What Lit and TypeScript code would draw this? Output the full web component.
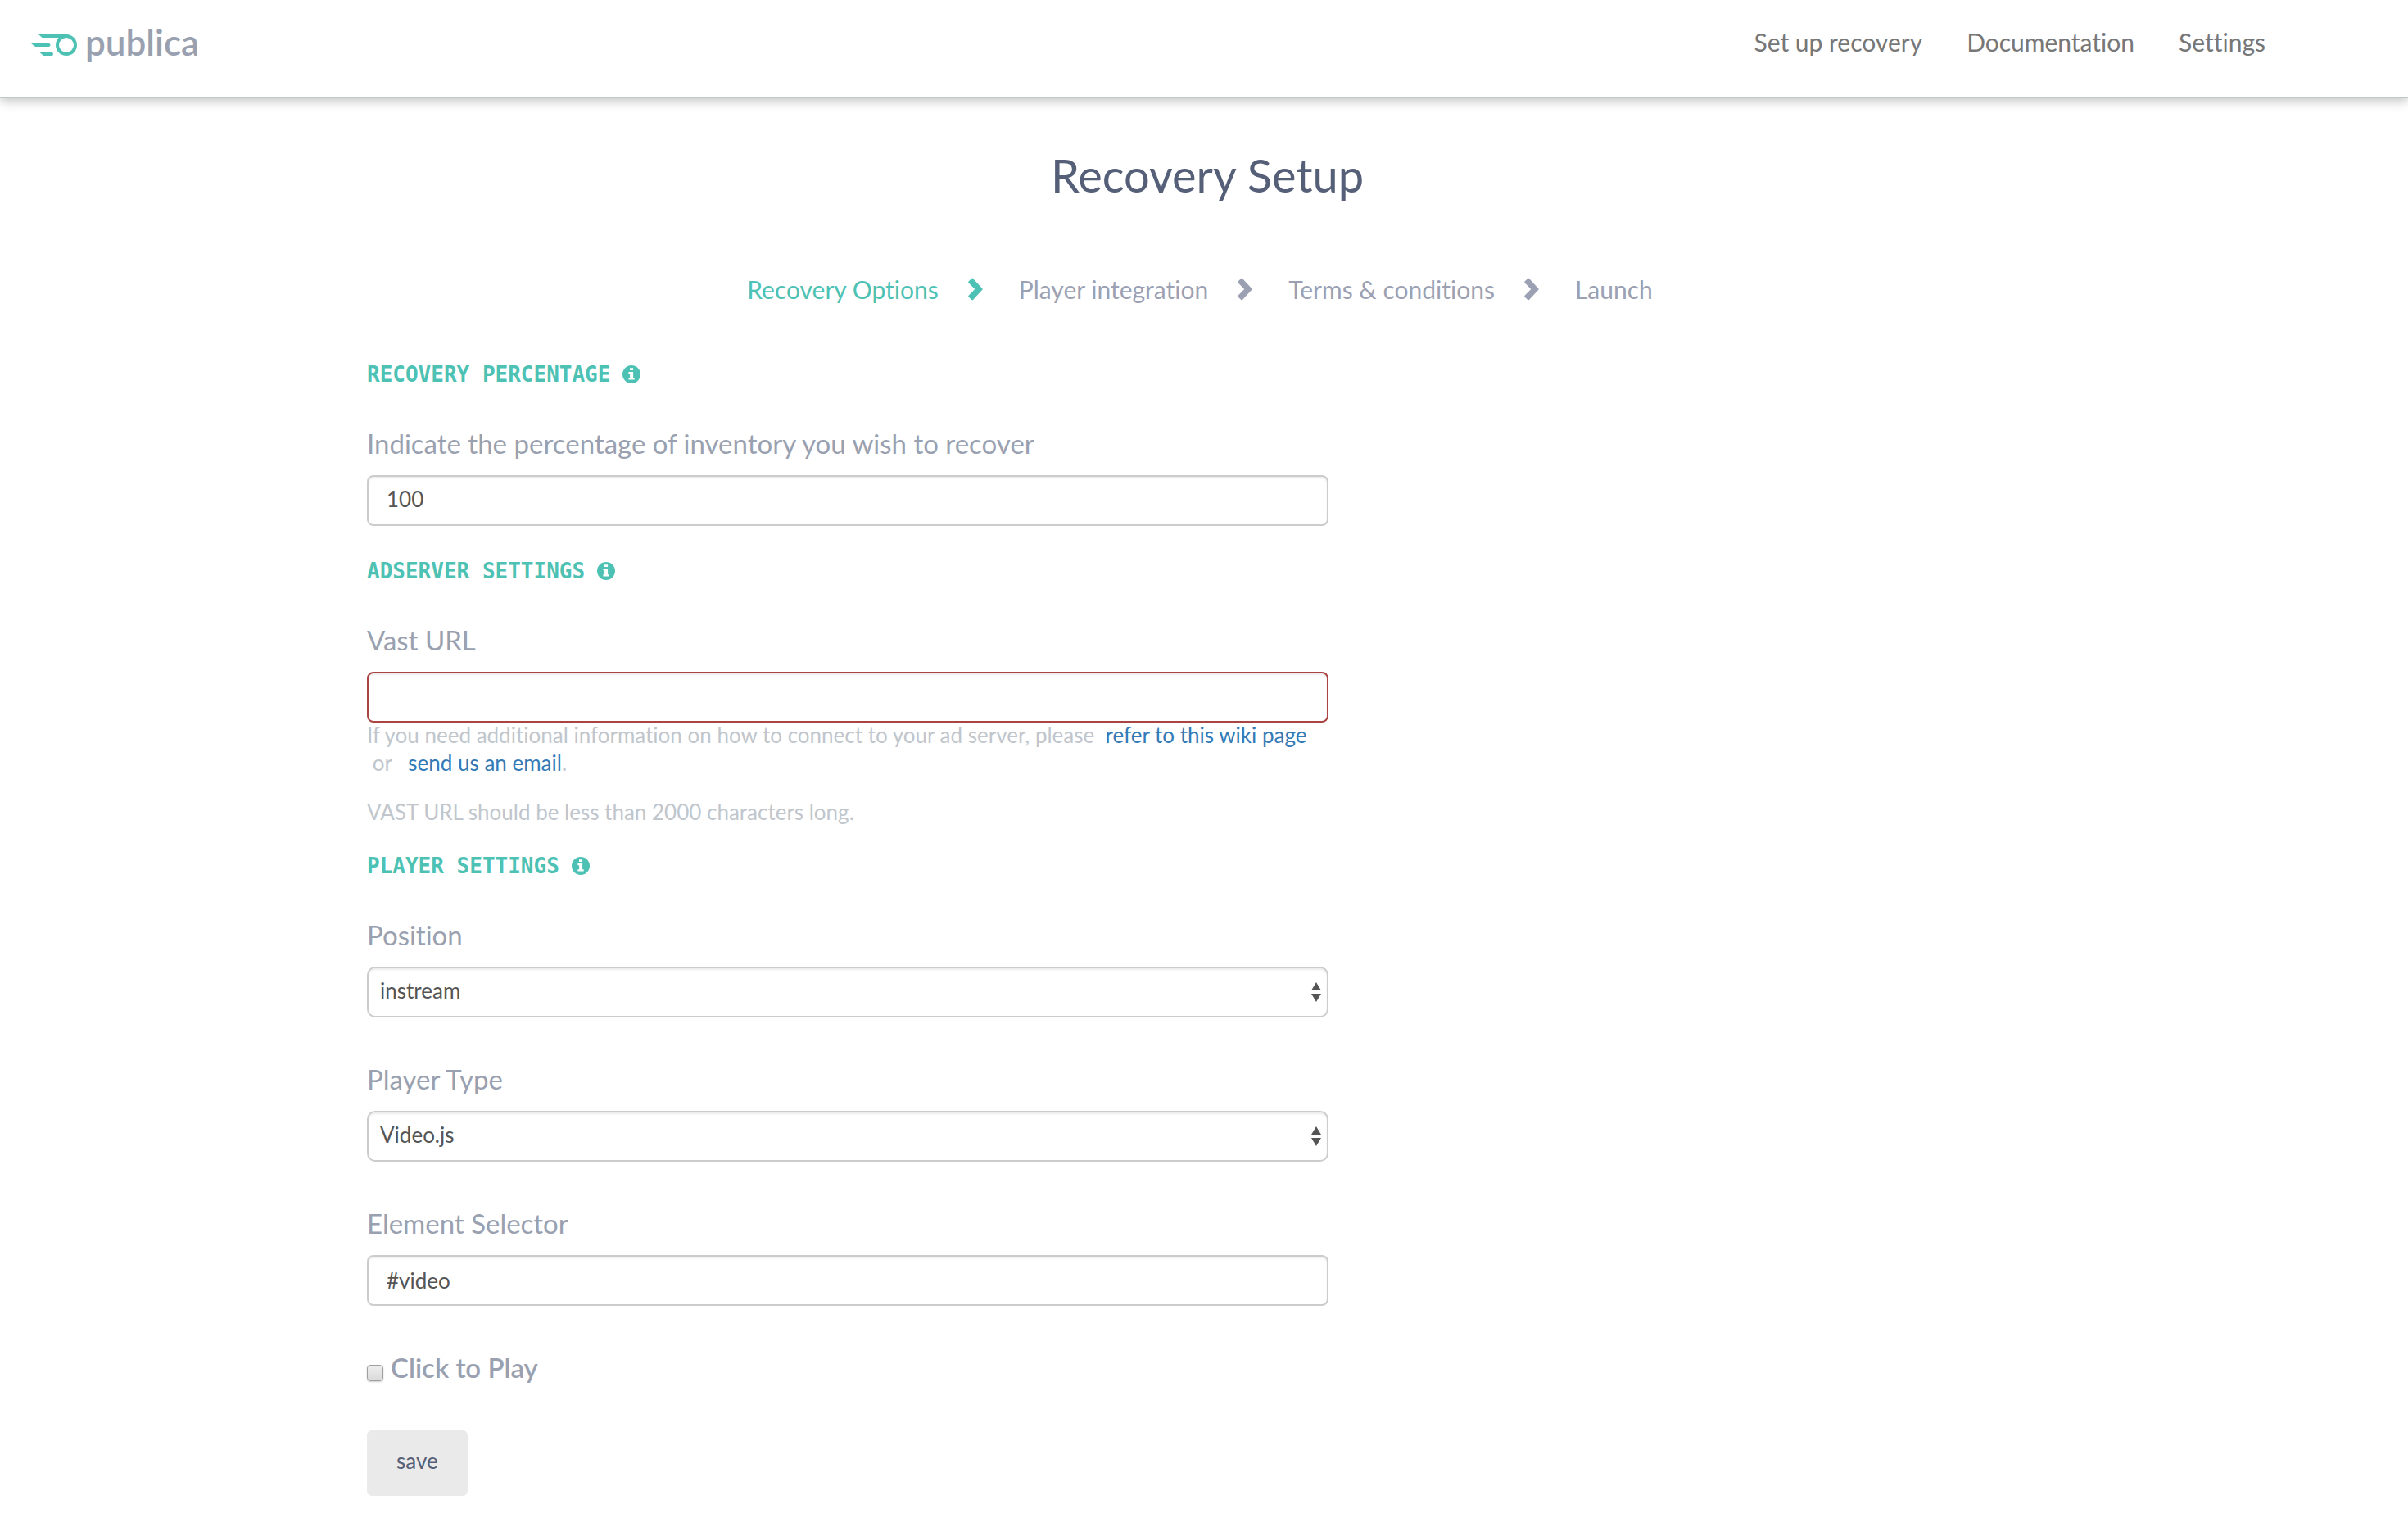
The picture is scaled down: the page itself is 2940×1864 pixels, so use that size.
import { LitElement, html, css, svg, nothing } from "lit";
import { customElement, state } from "lit/decorators.js";

const infoIcon = html`
  <svg class="info" viewBox="0 0 22 22" aria-hidden="true">
    <circle cx="11" cy="11" r="11" fill="currentColor" />
    <path
      fill="#fff"
      d="M9 3.2h4.1v2.9H9zM7.4 8h5.7v7.2h1.6v2.3H7.4v-2.3h1.7v-4.9H7.4z"
    />
  </svg>
`;

const chevronIcon = html`
  <svg class="chevron" viewBox="0 0 18 28" aria-hidden="true">
    <path
      fill="currentColor"
      d="M.6 4.6 4.3 1a1.2 1.2 0 0 1 1.700 0L17.300 13.200a1.100 1.100 0 0 1 0 1.600L6 27a1.200 1.200 0 0 1-1.700 0L.6 23.400a1.200 1.200 0 0 1 0-1.700L8.200 14 .6 6.300a1.200 1.200 0 0 1 0-1.700z"
    />
  </svg>
`;

const logoMark = svg`
  <path fill="#4dc2b4" d="M9 0H43v4H13.500z" />
  <path fill="#4dc2b4" d="M0 11H21.500a2 2 0 0 1 0 4H5z" />
  <path fill="#4dc2b4" d="M10.500 22H25a2 2 0 0 1 0 4H15z" />
  <circle cx="43" cy="13" r="11" fill="none" stroke="#4dc2b4" stroke-width="4" />
`;

@customElement("app-root")
export class AppRoot extends LitElement {
  static styles = css`
    :host {
      display: block;
      font-family: Lato, "Liberation Sans", sans-serif;
      font-size: 26px;
      font-variant-ligatures: none;
      line-height: 34px;
      color: #555;
      background: #fff;
    }
    *,
    *::before,
    *::after {
      box-sizing: border-box;
    }
    svg {
      display: block;
      flex: none;
    }
    .header {
      display: flex;
      align-items: center;
      justify-content: space-between;
      padding: 31px 174px 47px 38px;
      border-bottom: 2px solid #c1c6c9;
      box-shadow: 0 4px 12px rgba(0, 0, 0, 0.22);
      line-height: 40px;
    }
    .logo {
      display: flex;
      align-items: center;
      gap: 10px;
      font-size: 44px;
      font-weight: 600;
      color: #99a1b0;
      text-decoration: none;
    }
    .mark {
      width: 56px;
      height: 26px;
      margin-top: 8px;
    }
    .nav {
      display: flex;
      gap: 54px;
    }
    .nav-link {
      font-size: 30px;
      color: #777;
      text-decoration: none;
    }
    .main {
      padding: 64px 448px 38px;
    }
    .title {
      margin: 0 0 89px;
      padding-left: 8px;
      font-size: 56px;
      font-weight: 400;
      line-height: 60px;
      text-align: center;
      color: #555f77;
    }
    .steps {
      display: flex;
      justify-content: center;
      margin: 0 0 69px;
      padding: 0 10px 0 0;
      list-style: none;
      font-size: 30px;
      line-height: 40px;
      color: #9ba1b3;
    }
    .step {
      display: flex;
      align-items: center;
    }
    .current {
      color: #4dc2b4;
    }
    .chevron {
      width: 18px;
      height: 28px;
      margin: 0 44px 0 36px;
    }
    .form {
      width: calc((100% + 896px) * 0.4 - 2px);
      min-width: 640px;
    }
    .section {
      display: flex;
      align-items: center;
      gap: 15px;
      margin: 0 0 49px;
      font-family: "DejaVu Sans Mono", "Liberation Mono", monospace;
      font-size: 26px;
      font-weight: 700;
      line-height: 30px;
      color: #4dc2b4;
    }
    .info {
      width: 22px;
      height: 22px;
    }
    .group {
      display: grid;
      gap: 55px;
      margin-bottom: 40px;
    }
    .field {
      display: grid;
      gap: 19px;
    }
    .label {
      font-size: 33px;
      line-height: 40px;
      color: #99a1b0;
    }
    .control {
      width: 100%;
      height: 62px;
      margin: 0;
      padding: 0 22px;
      border: 2px solid #ccc;
      border-radius: 8px;
      background: #fff;
      box-shadow: inset 0 2px 2px rgba(0, 0, 0, 0.075);
      font: inherit;
      color: #555;
      appearance: none;
      -moz-appearance: textfield;
    }
    .raised {
      padding-bottom: 4px;
    }
    .control::-webkit-inner-spin-button {
      display: none;
    }
    .invalid {
      border-color: #a94442;
    }
    .select {
      display: grid;
      align-items: center;
    }
    .select > * {
      grid-area: 1 / 1;
    }
    .select .control {
      padding: 0 40px 4px 14px;
      border-radius: 10px;
    }
    .arrows {
      width: 12px;
      height: 24px;
      margin-right: 9px;
      justify-self: end;
      pointer-events: none;
    }
    .help {
      margin: -2px 0 34px;
      color: #c0c6cc;
    }
    .help p {
      margin: 0 0 26px;
    }
    .help p:last-child {
      margin: 0;
    }
    .help a {
      color: #337ab7;
      text-decoration: none;
    }
    .check {
      display: flex;
      align-items: center;
      gap: 9px;
      font-weight: 600;
    }
    .box {
      width: 20px;
      height: 20px;
      margin: 14px 0 0;
      border: 1px solid #a0a0a0;
      border-radius: 4px;
      background: linear-gradient(#eee, #dadada);
      box-shadow: 0 1px 2px rgba(0, 0, 0, 0.2);
      appearance: none;
    }
    .box:checked {
      background: #4dc2b4;
    }
    .save {
      margin-top: 17px;
      padding: 20px 36px 26px;
      border: 0;
      border-radius: 6px;
      background: #eaeaea;
      font: inherit;
      color: #555f77;
    }
  `;

  @state() private position = "instream";
  @state() private player = "Video.js";

  private steps = [
    "Recovery Options",
    "Player integration",
    "Terms & conditions",
    "Launch",
  ];

  private section(text: string) {
    return html`<h2 class="section">${text}${infoIcon}</h2>`;
  }

  private select(
    id: string,
    label: string,
    value: string,
    options: string[],
    onChange: (v: string) => void
  ) {
    return html`
      <div class="field">
        <label class="label" for=${id}>${label}</label>
        <div class="select">
          <select
            class="control"
            id=${id}
            @change=${(e: Event) =>
              onChange((e.target as HTMLSelectElement).value)}
          >
            ${options.map(
              (o) => html`<option ?selected=${o === value}>${o}</option>`
            )}
          </select>
          <svg class="arrows" viewBox="0 0 12 24" aria-hidden="true">
            <path fill="#555" d="M6 0l6 10H0zM6 24l6-10H0z" />
          </svg>
        </div>
      </div>
    `;
  }

  render() {
    return html`
      <header class="header">
        <a class="logo" href="#">
          <svg class="mark" viewBox="0 0 56 26" aria-hidden="true">
            ${logoMark}
          </svg>
          publica
        </a>
        <nav class="nav">
          <a class="nav-link" href="#setup">Set up recovery</a>
          <a class="nav-link" href="#docs">Documentation</a>
          <a class="nav-link" href="#settings">Settings</a>
        </nav>
      </header>
      <main class="main">
        <h1 class="title">Recovery Setup</h1>
        <ol class="steps">
          ${this.steps.map(
            (s, i) => html`
              <li
                class=${i === 0 ? "step current" : "step"}
                aria-current=${i === 0 ? "step" : nothing}
              >
                ${s}${i < this.steps.length - 1 ? chevronIcon : nothing}
              </li>
            `
          )}
        </ol>
        <form class="form" @submit=${(e: Event) => e.preventDefault()}>
          ${this.section("RECOVERY PERCENTAGE")}
          <div class="group">
            <div class="field">
              <label class="label" for="percentage"
                >Indicate the percentage of inventory you wish to recover</label
              >
              <input
                class="control raised"
                id="percentage"
                type="number"
                min="0"
                max="100"
                value="100"
              />
            </div>
          </div>
          ${this.section("ADSERVER SETTINGS")}
          <div class="field">
            <label class="label" for="vast">Vast URL</label>
            <input
              class="control invalid"
              id="vast"
              type="text"
              aria-invalid="true"
              aria-describedby="vast-help"
            />
          </div>
          <div class="help" id="vast-help">
            <p>
              If you need additional information on how to connect to your ad
              server, please &nbsp;<a href="#wiki">refer to this wiki page</a>
              &nbsp;or&nbsp;&nbsp;&nbsp;<a href="#email">send us an email</a>.
            </p>
            <p>VAST URL should be less than 2000 characters long.</p>
          </div>
          ${this.section("PLAYER SETTINGS")}
          <div class="group">
            ${this.select(
              "position",
              "Position",
              this.position,
              ["instream", "outstream"],
              (v) => (this.position = v)
            )}
            ${this.select(
              "player",
              "Player Type",
              this.player,
              ["Video.js", "JW Player"],
              (v) => (this.player = v)
            )}
            <div class="field">
              <label class="label" for="selector">Element Selector</label>
              <input
                class="control"
                id="selector"
                type="text"
                value="#video"
              />
            </div>
            <label class="label check">
              <input class="box" type="checkbox" />Click to Play
            </label>
          </div>
          <button class="save" type="submit">save</button>
        </form>
      </main>
    `;
  }
}
